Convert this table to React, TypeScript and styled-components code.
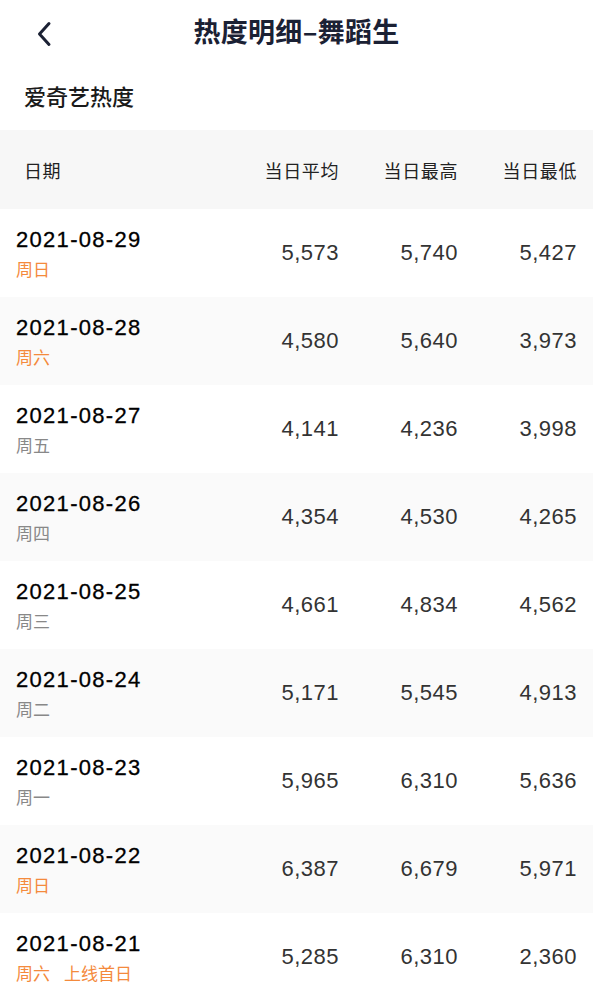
import React from "react";
import styled, { createGlobalStyle } from "styled-components";

const Global = createGlobalStyle`
  html, body { margin: 0; padding: 0; background: #ffffff; }
  body { font-family: "Liberation Sans", "Noto Sans CJK SC", sans-serif; -webkit-font-smoothing: antialiased; }
  * { box-sizing: border-box; }
`;

const Page = styled.div`
  width: 593px;
  background: #fff;
`;

const NavBar = styled.div`
  height: 62px;
  display: flex;
  align-items: center;
  justify-content: center;
  position: relative;
`;

const BackButton = styled.div`
  position: absolute;
  left: 33px;
  top: 19px;
  width: 22px;
  height: 30px;
  display: flex;
  align-items: center;
  justify-content: center;
`;

const Title = styled.h1`
  margin: 0;
  font-family: "Noto Sans CJK SC", sans-serif;
  font-size: 27px;
  line-height: 34px;
  font-weight: 700;
  color: #1b2134;
  letter-spacing: 0.3px;
`;

const SectionTitle = styled.div`
  height: 68px;
  display: flex;
  align-items: center;
  padding-left: 24px;
  padding-bottom: 2px;
  font-family: "Noto Sans CJK SC", sans-serif;
  font-size: 22px;
  font-weight: 500;
  color: #1a1a1a;
`;

const Grid = styled.div<{ $bg: string; $h: number; $pl: number }>`
  display: grid;
  grid-template-columns: 1fr 119px 119px 119px;
  align-items: center;
  height: ${(p) => p.$h}px;
  padding: 0 16px 0 ${(p) => p.$pl}px;
  background: ${(p) => p.$bg};
`;

const HeadCell = styled.div<{ $right?: boolean }>`
  font-family: "Noto Sans CJK SC", sans-serif;
  font-size: 18px;
  color: #222;
  text-align: ${(p) => (p.$right ? "right" : "left")};
  letter-spacing: 0.6px;
`;

const DateCell = styled.div`
  display: flex;
  flex-direction: column;
`;

const DateText = styled.div`
  font-size: 22px;
  line-height: 30px;
  color: #000;
  letter-spacing: 1.3px;
  -webkit-text-stroke: 0.3px #000;
`;

const WeekText = styled.div<{ $hot: boolean }>`
  margin-top: 2px;
  font-family: "Noto Sans CJK SC", sans-serif;
  font-size: 17px;
  line-height: 24px;
  color: ${(p) => (p.$hot ? "#f48a3c" : "#888888")};
  display: flex;
  gap: 14px;
`;

const Num = styled.div`
  font-size: 22px;
  color: #333;
  text-align: right;
  letter-spacing: 0.5px;
`;

type Row = { date: string; week: string; avg: string; max: string; min: string; hot: boolean; extra?: string };

const rows: Row[] = [
  { date: "2021-08-29", week: "周日", avg: "5,573", max: "5,740", min: "5,427", hot: true },
  { date: "2021-08-28", week: "周六", avg: "4,580", max: "5,640", min: "3,973", hot: true },
  { date: "2021-08-27", week: "周五", avg: "4,141", max: "4,236", min: "3,998", hot: false },
  { date: "2021-08-26", week: "周四", avg: "4,354", max: "4,530", min: "4,265", hot: false },
  { date: "2021-08-25", week: "周三", avg: "4,661", max: "4,834", min: "4,562", hot: false },
  { date: "2021-08-24", week: "周二", avg: "5,171", max: "5,545", min: "4,913", hot: false },
  { date: "2021-08-23", week: "周一", avg: "5,965", max: "6,310", min: "5,636", hot: false },
  { date: "2021-08-22", week: "周日", avg: "6,387", max: "6,679", min: "5,971", hot: true },
  { date: "2021-08-21", week: "周六", avg: "5,285", max: "6,310", min: "2,360", hot: true, extra: "上线首日" },
];

export default function App() {
  return (
    <Page>
      <Global />
      <NavBar>
        <BackButton>
          <svg width="16" height="26" viewBox="0 0 16 26" fill="none">
            <path d="M13 2.5 L3.5 13 L13 23.5" stroke="#1b2134" strokeWidth="3" strokeLinecap="round" strokeLinejoin="round" />
          </svg>
        </BackButton>
        <Title>热度明细–舞蹈生</Title>
      </NavBar>
      <SectionTitle>爱奇艺热度</SectionTitle>
      <Grid $bg="#f7f7f7" $h={79} $pl={24}>
        <HeadCell>日期</HeadCell>
        <HeadCell $right>当日平均</HeadCell>
        <HeadCell $right>当日最高</HeadCell>
        <HeadCell $right>当日最低</HeadCell>
      </Grid>
      {rows.map((r, i) => (
        <Grid key={r.date} $bg={i % 2 === 0 ? "#ffffff" : "#fafafa"} $h={88} $pl={16}>
          <DateCell>
            <DateText>{r.date}</DateText>
            <WeekText $hot={r.hot}>
              <span>{r.week}</span>
              {r.extra && <span>{r.extra}</span>}
            </WeekText>
          </DateCell>
          <Num>{r.avg}</Num>
          <Num>{r.max}</Num>
          <Num>{r.min}</Num>
        </Grid>
      ))}
    </Page>
  );
}
